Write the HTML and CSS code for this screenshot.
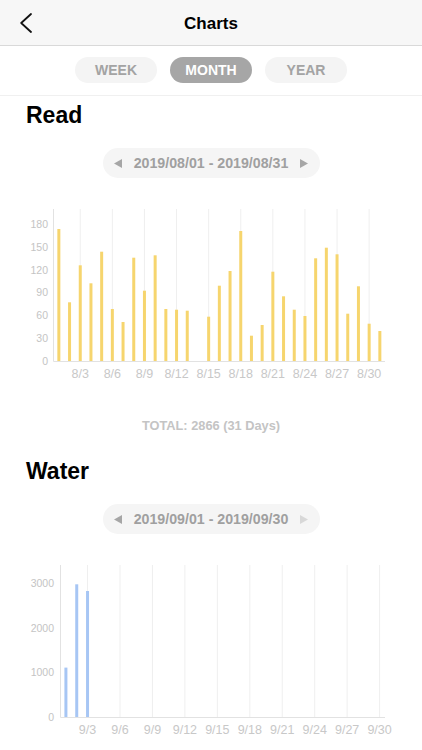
FILE: index.html
```html
<!DOCTYPE html>
<html lang="en">
<head>
<meta charset="utf-8">
<title>Charts</title>
<link rel="stylesheet" href="styles.css">
</head>
<body>
<header class="nav">
  <div class="nav-left">
    <svg class="back" viewBox="0 0 12 20" width="12" height="20"><polyline points="11,1 1.2,10 11,19"/></svg>
  </div>
  <h1 class="nav-title">Charts</h1>
  <div class="nav-right"></div>
</header>

<div class="tabs">
  <div class="tab">WEEK</div>
  <div class="tab active">MONTH</div>
  <div class="tab">YEAR</div>
</div>

<section class="section first">
  <h2 class="title">Read</h2>
  <div class="range">
    <svg class="tri" viewBox="0 0 8 9" width="8" height="9"><polygon points="8,0 8,9 0,4.5"/></svg>
    <span class="range-text">2019/08/01 - 2019/08/31</span>
    <svg class="tri" viewBox="0 0 8 9" width="8" height="9"><polygon points="0,0 0,9 8,4.5"/></svg>
  </div>
  <svg class="chart" viewBox="0 0 422 210" width="422" height="210">
    <g class="grid">
      <line x1="80.25" y1="31" x2="80.25" y2="183"/>
      <line x1="112.35" y1="31" x2="112.35" y2="183"/>
      <line x1="144.45" y1="31" x2="144.45" y2="183"/>
      <line x1="176.55" y1="31" x2="176.55" y2="183"/>
      <line x1="208.65" y1="31" x2="208.65" y2="183"/>
      <line x1="240.75" y1="31" x2="240.75" y2="183"/>
      <line x1="272.85" y1="31" x2="272.85" y2="183"/>
      <line x1="304.95" y1="31" x2="304.95" y2="183"/>
      <line x1="337.05" y1="31" x2="337.05" y2="183"/>
      <line x1="369.15" y1="31" x2="369.15" y2="183"/>
    </g>
    <g class="axis">
      <line x1="53.5" y1="31" x2="53.5" y2="183.5"/>
      <line x1="53.5" y1="183.5" x2="385" y2="183.5"/>
    </g>
    <g class="bars-read">
      <rect x="57.35" y="51" width="3" height="132"/>
      <rect x="68.05" y="124.3" width="3" height="58.7"/>
      <rect x="78.75" y="87.3" width="3" height="95.7"/>
      <rect x="89.45" y="105.3" width="3" height="77.7"/>
      <rect x="100.15" y="73.7" width="3" height="109.3"/>
      <rect x="110.85" y="131" width="3" height="52"/>
      <rect x="121.55" y="144" width="3" height="39"/>
      <rect x="132.25" y="79.7" width="3" height="103.3"/>
      <rect x="142.95" y="112.7" width="3" height="70.3"/>
      <rect x="153.65" y="77.3" width="3" height="105.7"/>
      <rect x="164.35" y="131" width="3" height="52"/>
      <rect x="175.05" y="131.7" width="3" height="51.3"/>
      <rect x="185.75" y="132.7" width="3" height="50.3"/>
      <rect x="207.15" y="138.7" width="3" height="44.3"/>
      <rect x="217.85" y="107.7" width="3" height="75.3"/>
      <rect x="228.55" y="93" width="3" height="90"/>
      <rect x="239.25" y="53" width="3" height="130"/>
      <rect x="249.95" y="157.7" width="3" height="25.3"/>
      <rect x="260.65" y="147" width="3" height="36"/>
      <rect x="271.35" y="93.7" width="3" height="89.3"/>
      <rect x="282.05" y="118.3" width="3" height="64.7"/>
      <rect x="292.75" y="131.7" width="3" height="51.3"/>
      <rect x="303.45" y="138" width="3" height="45"/>
      <rect x="314.15" y="80.3" width="3" height="102.7"/>
      <rect x="324.85" y="69.7" width="3" height="113.3"/>
      <rect x="335.55" y="76.3" width="3" height="106.7"/>
      <rect x="346.25" y="135.7" width="3" height="47.3"/>
      <rect x="356.95" y="108.3" width="3" height="74.7"/>
      <rect x="367.65" y="145.7" width="3" height="37.3"/>
      <rect x="378.35" y="153" width="3" height="30"/>
    </g>
    <g class="ylab">
      <text x="48" y="186.8">0</text>
      <text x="48" y="164">30</text>
      <text x="48" y="141.2">60</text>
      <text x="48" y="118.4">90</text>
      <text x="48" y="95.6">120</text>
      <text x="48" y="72.8">150</text>
      <text x="48" y="50">180</text>
    </g>
    <g class="xlab">
      <text x="80.25" y="200">8/3</text>
      <text x="112.35" y="200">8/6</text>
      <text x="144.45" y="200">8/9</text>
      <text x="176.55" y="200">8/12</text>
      <text x="208.65" y="200">8/15</text>
      <text x="240.75" y="200">8/18</text>
      <text x="272.85" y="200">8/21</text>
      <text x="304.95" y="200">8/24</text>
      <text x="337.05" y="200">8/27</text>
      <text x="369.15" y="200">8/30</text>
    </g>
  </svg>
  <p class="total">TOTAL: 2866 (31 Days)</p>
</section>

<section class="section">
  <h2 class="title">Water</h2>
  <div class="range">
    <svg class="tri" viewBox="0 0 8 9" width="8" height="9"><polygon points="8,0 8,9 0,4.5"/></svg>
    <span class="range-text">2019/09/01 - 2019/09/30</span>
    <svg class="tri off" viewBox="0 0 8 9" width="8" height="9"><polygon points="0,0 0,9 8,4.5"/></svg>
  </div>
  <svg class="chart" viewBox="0 0 422 210" width="422" height="210">
    <g class="grid">
      <line x1="87.54" y1="31" x2="87.54" y2="183"/>
      <line x1="119.99" y1="31" x2="119.99" y2="183"/>
      <line x1="152.44" y1="31" x2="152.44" y2="183"/>
      <line x1="184.89" y1="31" x2="184.89" y2="183"/>
      <line x1="217.35" y1="31" x2="217.35" y2="183"/>
      <line x1="249.8" y1="31" x2="249.8" y2="183"/>
      <line x1="282.25" y1="31" x2="282.25" y2="183"/>
      <line x1="314.7" y1="31" x2="314.7" y2="183"/>
      <line x1="347.15" y1="31" x2="347.15" y2="183"/>
      <line x1="379.6" y1="31" x2="379.6" y2="183"/>
    </g>
    <g class="axis">
      <line x1="60.5" y1="31" x2="60.5" y2="183.5"/>
      <line x1="60.5" y1="183.5" x2="385" y2="183.5"/>
    </g>
    <g class="bars-water">
      <rect x="64.41" y="133.6" width="3" height="49.4"/>
      <rect x="75.23" y="50.3" width="3" height="132.7"/>
      <rect x="86.04" y="57" width="3" height="126"/>
    </g>
    <g class="ylab">
      <text x="54" y="186.8">0</text>
      <text x="54" y="142.3">1000</text>
      <text x="54" y="97.8">2000</text>
      <text x="54" y="53.3">3000</text>
    </g>
    <g class="xlab">
      <text x="87.54" y="200">9/3</text>
      <text x="119.99" y="200">9/6</text>
      <text x="152.44" y="200">9/9</text>
      <text x="184.89" y="200">9/12</text>
      <text x="217.35" y="200">9/15</text>
      <text x="249.8" y="200">9/18</text>
      <text x="282.25" y="200">9/21</text>
      <text x="314.7" y="200">9/24</text>
      <text x="347.15" y="200">9/27</text>
      <text x="379.6" y="200">9/30</text>
    </g>
  </svg>
</section>
</body>
</html>
```
FILE: styles.css
```css
html, body {
  margin: 0;
  padding: 0;
  background: #ffffff;
}
body {
  width: 422px;
  height: 750px;
  overflow: hidden;
  font-family: "Liberation Sans", Arial, sans-serif;
  color: #000;
}

.nav {
  height: 45px;
  background: #f7f7f7;
  border-bottom: 1px solid #d9d9d9;
  display: grid;
  grid-template-columns: 1fr auto 1fr;
  align-items: center;
}
.nav-left {
  display: flex;
  align-items: center;
  padding-left: 20px;
}
.back {
  display: block;
  fill: none;
  stroke: #111;
  stroke-width: 1.8;
  stroke-linecap: round;
  stroke-linejoin: round;
}
.nav-title {
  margin: 0;
  font-size: 17px;
  font-weight: bold;
  line-height: 45px;
  padding-top: 1px;
}

.tabs {
  display: flex;
  justify-content: center;
  gap: 12.5px;
  padding: 11px 0 12px;
  border-bottom: 1px solid #f0f0f0;
}
.tab {
  width: 82.5px;
  height: 26px;
  border-radius: 13px;
  background: #f4f4f4;
  color: #a3a3a3;
  font-size: 14px;
  font-weight: bold;
  display: flex;
  align-items: center;
  justify-content: center;
}
.tab.active {
  background: #a6a6a6;
  color: #ffffff;
}

.section {
  padding-top: 23px;
}
.section.first {
  padding-top: 5px;
}
.title {
  margin: 0;
  padding-left: 26px;
  font-size: 23px;
  line-height: 28px;
  font-weight: bold;
}

.range {
  margin: 19px auto 0;
  width: 217px;
  height: 30px;
  box-sizing: border-box;
  padding: 0 11.5px;
  border-radius: 15px;
  background: #f5f5f5;
  display: flex;
  align-items: center;
  justify-content: space-between;
}
.range-text {
  font-size: 14.2px;
  font-weight: bold;
  color: #a0a0a0;
}
.tri {
  display: block;
  fill: #a6a6a6;
}
.tri.off {
  fill: #d8d8d8;
}

.chart {
  display: block;
}
.grid line {
  stroke: #efefef;
  stroke-width: 1;
}
.axis line {
  stroke: #e2e2e2;
  stroke-width: 1;
}
.bars-read rect {
  fill: #f6d56e;
}
.bars-water rect {
  fill: #a7c6f4;
}
.ylab text {
  font-family: "Liberation Sans", Arial, sans-serif;
  font-size: 10.5px;
  fill: #c4c4c4;
  text-anchor: end;
}
.xlab text {
  font-family: "Liberation Sans", Arial, sans-serif;
  font-size: 12.5px;
  fill: #c8c8c8;
  text-anchor: middle;
}

.total {
  margin: 30px 0 0;
  text-align: center;
  font-size: 12.8px;
  line-height: 16px;
  font-weight: bold;
  color: #c4c4c4;
}
```
